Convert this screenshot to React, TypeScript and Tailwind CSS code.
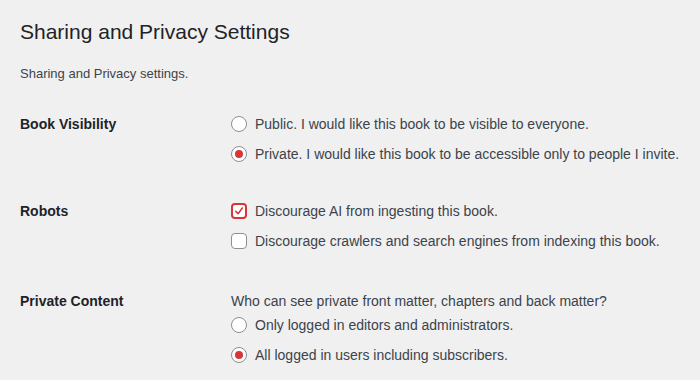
import React from 'react'

function Radio({ checked, label }: { checked?: boolean; label: string }) {
  return (
    <label className="flex items-center h-5 gap-2 cursor-pointer">
      <span className="w-4 h-4 rounded-full border border-[#8c8f94] bg-white flex items-center justify-center shrink-0">
        {checked && <span className="w-2 h-2 rounded-full bg-[#d63638]" />}
      </span>
      <span>{label}</span>
    </label>
  )
}

function Checkbox({ checked, label }: { checked?: boolean; label: string }) {
  return (
    <label className="flex items-center h-5 gap-2 cursor-pointer">
      <span
        className={`w-4 h-4 rounded-[4px] bg-white flex items-center justify-center shrink-0 ${
          checked ? 'border-2 border-[#d63638]' : 'border border-[#8c8f94]'
        }`}
      >
        {checked && (
          <svg viewBox="0 0 20 20" className="w-4 h-4">
            <path d="M4.5 10.5 L8.5 14.5 L15.5 5" fill="none" stroke="#d63638" strokeWidth="2.6" strokeLinecap="round" strokeLinejoin="round" />
          </svg>
        )}
      </span>
      <span>{label}</span>
    </label>
  )
}

function Row({ label, children, className = '' }: { label: string; children: React.ReactNode; className?: string }) {
  return (
    <div className={`grid grid-cols-[211px_1fr] ${className}`}>
      <div className="h-5 flex items-center font-semibold text-[#1d2327]">{label}</div>
      <div>{children}</div>
    </div>
  )
}

export default function App() {
  return (
    <div className="min-h-[380px] bg-[#f0f0f1] px-5 pt-[18px] text-[14px] leading-5 text-[#3c434a] font-['Liberation_Sans',Arial,sans-serif]">
      <h1 className="text-[21px] leading-7 font-normal text-[#1d2327]">Sharing and Privacy Settings</h1>
      <p className="mt-[20px] text-[13px] leading-4">Sharing and Privacy settings.</p>

      <Row label="Book Visibility" className="mt-[32px]">
        <div className="flex flex-col gap-[10px]">
          <Radio label="Public. I would like this book to be visible to everyone." />
          <Radio checked label="Private. I would like this book to be accessible only to people I invite." />
        </div>
      </Row>

      <Row label="Robots" className="mt-[37px]">
        <div className="flex flex-col gap-[10px]">
          <Checkbox checked label="Discourage AI from ingesting this book." />
          <Checkbox label="Discourage crawlers and search engines from indexing this book." />
        </div>
      </Row>

      <Row label="Private Content" className="mt-[40px]">
        <p>Who can see private front matter, chapters and back matter?</p>
        <div className="flex flex-col gap-[10px] mt-1">
          <Radio label="Only logged in editors and administrators." />
          <Radio checked label="All logged in users including subscribers." />
        </div>
      </Row>
    </div>
  )
}
